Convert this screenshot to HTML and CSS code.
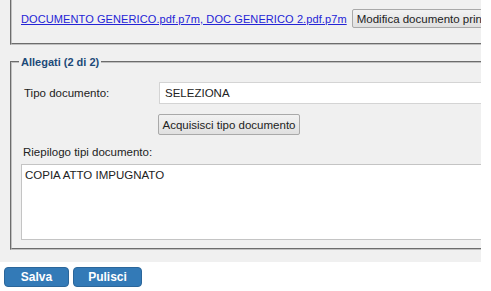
FILE: index.html
```html
<!DOCTYPE html>
<html>

<head>
  <meta name="viewport" content="width=device-width,initial-scale=1.0">
  <meta charset="utf-8">
  <title>Allegati</title>
  <link rel="stylesheet" href="styles.css">
</head>

<body>
  <div class="panel">
    <!-- documento principale -->
    <fieldset class="box box-top">
      <div class="doc-line">
        <a href="#" class="doc-link">DOCUMENTO GENERICO.pdf.p7m, DOC GENERICO 2.pdf.p7m</a>
        <button class="btn btn-grey btn-modifica">Modifica documento principale</button>
      </div>
    </fieldset>

    <!-- allegati -->
    <fieldset class="box box-att">
      <legend>Allegati (2 di 2)</legend>
      <div class="row">
        <label class="lbl" for="tipo">Tipo documento:</label>
        <select id="tipo" class="sel">
          <option>SELEZIONA</option>
        </select>
      </div>
      <div class="row row-btn">
        <button class="btn btn-grey">Acquisisci tipo documento</button>
      </div>
      <div class="lbl-top">Riepilogo tipi documento:</div>
      <textarea class="riepilogo" readonly>COPIA ATTO IMPUGNATO</textarea>
    </fieldset>
  </div>

  <div class="actions">
    <button class="btn btn-blue btn-salva">Salva</button>
    <button class="btn btn-blue btn-pulisci">Pulisci</button>
  </div>
</body>

</html>
```

FILE: styles.css
```css
* {
  box-sizing: border-box;
}

body {
  margin: 0;
  font-family: "Liberation Sans", Arial, sans-serif;
  font-size: 11.5px;
  color: #222;
  background-color: #fff;
}

.panel {
  width: 481px;
  height: 262px;
  background-color: #f0f0f0;
  overflow: hidden;
}

.box {
  width: 640px;
  margin: 0 0 0 10px;
  border: 2px groove #c0c0c0;
  padding: 0;
  min-width: 0;
}

.box-top {
  border-top: 0;
  height: 45px;
  padding: 9px 0 0 9px;
}

.doc-line {
  display: flex;
  align-items: center;
  gap: 5px;
}

.doc-link {
  color: #2424d6;
  font-size: 11px;
  letter-spacing: 0.1px;
}

.btn {
  font-family: "Liberation Sans", Arial, sans-serif;
  font-size: 12px;
  cursor: pointer;
}

.btn-grey {
  height: 20px;
  padding: 0 4px;
  color: #222;
  background: linear-gradient(#f2f2f2, #e0e0e0);
  border: 1px solid #a9a9a9;
  border-radius: 2px;
  white-space: nowrap;
}

.btn-modifica {
  height: 19px;
  font-size: 11.5px;
}

.box-att {
  margin-top: 11px;
  height: 194px;
}

.box-att legend {
  margin-left: 7px;
  padding: 0 2px;
  font-size: 11px;
  font-weight: bold;
  color: #1c4a78;
}

.row {
  display: flex;
  align-items: center;
}

.row:first-of-type {
  margin-top: 14px;
}

.lbl {
  width: 147px;
  padding-left: 12px;
}

.sel {
  appearance: none;
  -webkit-appearance: none;
  width: 400px;
  height: 22px;
  padding: 0 5px;
  font-family: "Liberation Sans", Arial, sans-serif;
  font-size: 11.5px;
  color: #222;
  background-color: #fff;
  border: 1px solid #d4d4d4;
  border-radius: 0;
}

.row-btn {
  margin-top: 10px;
  padding-left: 146px;
}

.row-btn .btn-grey {
  height: 21px;
  width: 142px;
  font-size: 11.5px;
  padding: 0;
}

.lbl-top {
  margin-top: 11px;
  padding-left: 11px;
}

.riepilogo {
  display: block;
  width: 600px;
  height: 76px;
  margin: 6px 0 0 9px;
  padding: 4px 3px;
  font-family: "Liberation Sans", Arial, sans-serif;
  font-size: 11.5px;
  color: #222;
  background-color: #fff;
  border: 1px solid #c4c4c4;
  resize: none;
}

.actions {
  display: flex;
  gap: 4px;
  padding: 5px 0 0 4px;
}

.btn-blue {
  height: 20px;
  color: #fff;
  font-weight: bold;
  background-color: #337ab7;
  border: 1px solid #2b669a;
  border-radius: 4px;
}

.btn-salva {
  width: 65px;
}

.btn-pulisci {
  width: 69px;
}
```
